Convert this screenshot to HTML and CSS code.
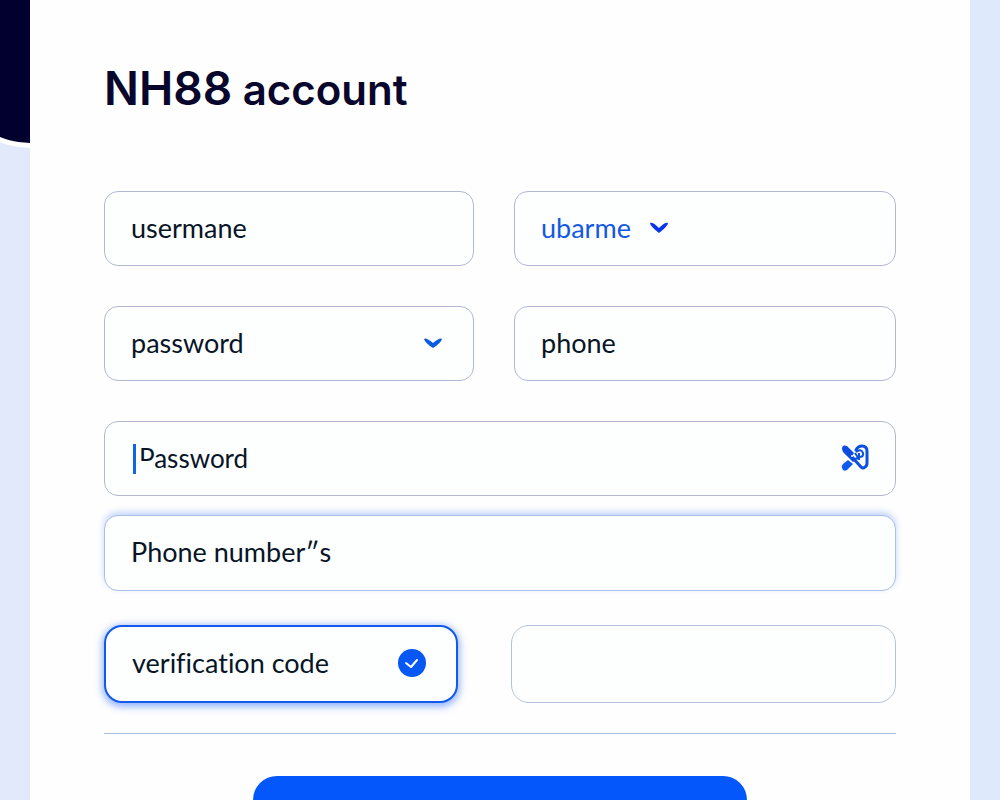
FILE: index.html
```
<!DOCTYPE html>
<html lang="en">
<head>
    <meta charset="UTF-8">
    <meta name="viewport" content="width=device-width, initial-scale=1.0">
    <title>NH88 account</title>
    <link rel="stylesheet" href="styles.css">
</head>
<body>
    <div class="corner-shape"></div>

    <main class="card">
        <h1><span class="brand">NH88</span> account</h1>

        <form class="account-form">
            <div class="row">
                <div class="field">
                    <input type="text" aria-label="Username" value="usermane">
                </div>
                <div class="field">
                    <select class="inline-select" aria-label="Account type">
                        <option>ubarme</option>
                    </select>
                    <svg class="chevron" viewBox="0 0 20 12" aria-hidden="true">
                        <path d="M1 1 Q4 0 10 6 Q16 0 19 1 Q19 4 10 11 Q1 4 1 1 Z"/>
                    </svg>
                </div>
            </div>

            <div class="row">
                <div class="field">
                    <select class="wide-select" aria-label="Password type">
                        <option>password</option>
                    </select>
                    <svg class="chevron chevron-light" viewBox="0 0 20 12" aria-hidden="true">
                        <path d="M1 2 Q3 0 10 6 Q17 0 19 2 Q18 6 10 11 Q2 6 1 2 Z"/>
                    </svg>
                </div>
                <div class="field">
                    <input type="tel" aria-label="Phone" value="phone">
                </div>
            </div>

            <div class="field field-password">
                <span class="caret"></span>
                <input type="text" aria-label="Password" value="Password">
                <button type="button" class="icon-button" aria-label="Toggle password">
                    <svg viewBox="0 0 28 28" aria-hidden="true">
                        <path d="M4 5 L20 23 Q22 25 24 23 Q26 22 26 19 V7 Q26 2 21 2 Q17 2 15 6" fill="none" stroke="#0b50e0" stroke-width="3" stroke-linecap="round" stroke-linejoin="round"/>
                        <path d="M1 5 Q1 0 6 2 L13 9 L11 12 L15 16 L12 18 L2 8 Z" fill="#0b4be0"/>
                        <path d="M7 16 L12 20 L6 26 Q2 28 1 24 Q0 22 2 20 Z" fill="#0b5cee"/>
                        <circle cx="11" cy="12" r="1" fill="#fff"/>
                        <path d="M14 9 L18 15 M15 8 Q20 4 22 9 Q23 13 18 13 M18 9 V16 M14 15 L22 12" fill="none" stroke="#0b50e0" stroke-width="2"/>
                    </svg>
                </button>
            </div>

            <div class="field field-number">
                <input type="text" aria-label="Phone number" value="Phone number″s">
            </div>

            <div class="row row-code">
                <div class="field field-active">
                    <input type="text" aria-label="Verification code" value="verification code">
                    <svg class="check" viewBox="0 0 28 28" aria-hidden="true">
                        <circle cx="14" cy="14" r="14" fill="#0757f5"/>
                        <path d="M8 14 L13 18 L19 11" fill="none" stroke="#fff" stroke-width="2" stroke-linecap="round" stroke-linejoin="round"/>
                    </svg>
                </div>
                <div class="field field-empty">
                    <input type="text" aria-label="Code">
                </div>
            </div>

            <hr>

            <button type="submit" class="submit-button" aria-label="Create account"></button>
        </form>
    </main>
</body>
</html>
```
FILE: styles.css
```
* {
    box-sizing: border-box;
}
body {
    margin: 0;
    min-height: 100vh;
    padding: 0 30px;
    background: linear-gradient(90deg, #e1e9fa, #deeafb);
    font-family: Lato, "Open Sans", sans-serif;
    color: #071526;
}
.corner-shape {
    position: absolute;
    top: -152px;
    left: -80px;
    width: 220px;
    height: 300px;
    background-color: #02002f;
    border: 5px solid #fff;
    border-radius: 50%;
}
.card {
    position: relative;
    min-height: 100vh;
    padding: 58px 74px 40px;
    background-color: #fefefe;
}
h1 {
    margin: 0 0 71px;
    font-family: Inter, Lato, sans-serif;
    font-size: 42px;
    font-weight: 600;
    line-height: 60px;
    color: #08062b;
}
.brand {
    font-size: 46px;
}
.row {
    display: grid;
    grid-template-columns: 370fr 382fr;
    gap: 40px;
    margin-bottom: 40px;
}
.field {
    position: relative;
    display: flex;
    align-items: center;
    min-width: 0;
    height: 75px;
    padding: 0 26px 2px;
    border: 1px solid #b3b7d4;
    border-radius: 14px;
    background-color: #fdfefe;
}
.field input,
.field select {
    min-width: 0;
    margin: 0;
    padding: 0;
    border: none;
    outline: none;
    background: transparent;
    font: inherit;
    font-size: 27px;
    line-height: 36px;
    color: inherit;
    appearance: none;
}
.field input,
.wide-select {
    flex: 1;
}
.field .inline-select {
    color: #1459e0;
}
.chevron {
    flex: none;
    width: 20px;
    height: 12px;
    margin-left: 18px;
    fill: #0a35ec;
}
.chevron-light {
    margin-right: 4px;
    fill: #0b5ce0;
}
.field-password {
    margin-bottom: 19px;
    padding-left: 34px;
}
.field-password input {
    font-size: 26px;
}
/* text cursor, with its edge over the first letter */
.caret {
    position: absolute;
    top: 22px;
    left: 28px;
    width: 3px;
    height: 30px;
    background-color: #1263ea;
}
.caret::after {
    content: "";
    position: absolute;
    top: 17px;
    left: 4px;
    width: 9px;
    height: 12px;
    background-color: #fdfefe;
}
.icon-button {
    width: 28px;
    height: 28px;
    padding: 0;
    border: none;
    background: none;
    cursor: pointer;
}
.icon-button svg {
    display: block;
}
.field-number {
    height: 76px;
    margin-bottom: 34px;
    border-color: #a9c0ea;
    box-shadow: 0 -3px 6px rgba(60, 120, 245, 0.3);
}
.row-code {
    grid-template-columns: 354fr 385fr;
    gap: 53px;
    margin-bottom: 30px;
}
.row-code .field {
    height: 78px;
    border-radius: 18px;
}
.row-code .field-active {
    border: 2px solid #1459ec;
    box-shadow: 0 2px 7px 2px rgba(50, 115, 250, 0.5);
}
.field-active input {
    font-variant-ligatures: none;
}
.check {
    flex: none;
    width: 28px;
    height: 28px;
    margin-right: 4px;
}
.row-code .field-empty {
    border-color: #b5c2dc;
}
hr {
    margin: 0 0 42px;
    border: none;
    border-top: 1px solid #a9bfe0;
}
.submit-button {
    display: block;
    width: 494px;
    max-width: 100%;
    height: 76px;
    margin: 0 auto;
    border: none;
    border-radius: 24px;
    background-color: #0458fb;
    cursor: pointer;
}
```
